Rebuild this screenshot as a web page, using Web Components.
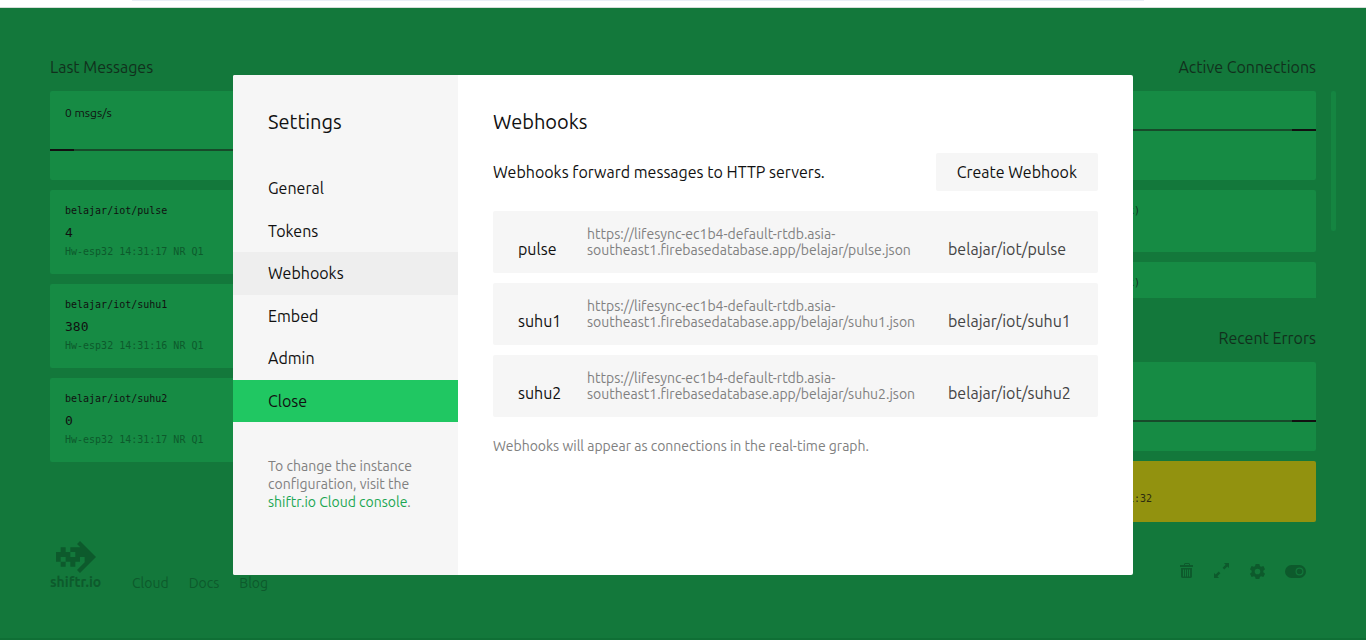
<!DOCTYPE html>
<html lang="en">
<head>
<meta charset="utf-8">
<meta name="viewport" content="width=device-width, initial-scale=1">
<title>shiftr.io – Settings</title>
<style>
  html, body { height: 100%; margin: 0; }
  body {
    --sans: Ubuntu, "Noto Sans", sans-serif;
    --mono: "DejaVu Sans Mono", monospace;
    --ink: #111;
    --card: #168b44;
    --shade: #0d5a2c;
    font: 16px/18px var(--sans);
    color: var(--ink);
    background: #13783b;
  }
</style>
</head>
<body>
<shiftr-app>
  <message-panel slot="left"></message-panel>
  <status-panel slot="right"></status-panel>
  <app-footer slot="footer"></app-footer>
  <settings-dialog slot="dialog">
    <settings-nav slot="nav"></settings-nav>
    <webhook-list></webhook-list>
  </settings-dialog>
</shiftr-app>

<script>
const define = (name, html) => {
  const template = document.createElement('template');
  template.innerHTML = html;
  customElements.define(name, class extends HTMLElement {
    constructor() {
      super();
      this.attachShadow({ mode: 'open' }).append(template.content.cloneNode(true));
    }
  });
};

define('shiftr-app', `
  <style>
    :host { display: flex; flex-direction: column; min-height: 100vh; box-sizing: border-box; position: relative; border-bottom: 2px solid #0f6f35; }
    .chrome { height: 7px; background: #fff; border-bottom: 1px solid #d5ddd8; padding: 0 222px 0 132px; }
    .chrome div { height: 1px; background: #e9eef6; }
    main { flex: 1; display: flex; justify-content: space-between; padding: 49px 50px 0; }
    .overlay { position: absolute; inset: 8px 0 0; display: flex; align-items: flex-start; justify-content: center; padding-top: 67px; }
  </style>
  <div class="chrome"><div></div></div>
  <main><slot name="left"></slot><slot name="right"></slot></main>
  <slot name="footer"></slot>
  <div class="overlay"><slot name="dialog"></slot></div>
`);

define('panel-title', `
  <style>
    :host { display: block; margin-bottom: 14px; opacity: .7; }
    h2 { margin: 0; font-size: 16px; line-height: 20px; font-weight: 400; }
  </style>
  <h2><slot></slot></h2>
`);

define('rate-card', `
  <style>
    :host { display: flex; flex-direction: column; box-sizing: border-box; height: 89px; border-radius: 2px; background: var(--card); font-size: 12px; }
    span { flex: 0 0 var(--top, 58px); box-sizing: border-box; padding: 13px 15px 0; }
    .line { display: flex; height: 2px; background: #174a2a; }
    .line::before { content: ""; width: 24px; background: var(--ink); }
    :host([reverse]) .line { justify-content: flex-end; }
  </style>
  <span><slot></slot></span><div class="line"></div>
`);

define('message-card', `
  <style>
    :host { display: grid; align-content: start; box-sizing: border-box; height: 84px; padding: 12px 15px 0; border-radius: 2px; background: var(--card); font-family: var(--mono); font-size: 10px; }
    .value { font-size: 13px; line-height: 26px; }
    .meta { line-height: 12px; color: var(--shade); }
  </style>
  <slot name="topic"></slot>
  <div class="value"><slot></slot></div>
  <div class="meta"><slot name="meta"></slot></div>
`);

define('message-panel', `
  <style>
    :host { display: block; width: 203px; }
    .list { display: grid; gap: 10px; }
  </style>
  <panel-title>Last Messages</panel-title>
  <div class="list">
    <rate-card>0 msgs/s</rate-card>
    <message-card><span slot="topic">belajar/iot/pulse</span>4<span slot="meta">Hw-esp32 14:31:17 NR Q1</span></message-card>
    <message-card><span slot="topic">belajar/iot/suhu1</span>380<span slot="meta">Hw-esp32 14:31:16 NR Q1</span></message-card>
    <message-card><span slot="topic">belajar/iot/suhu2</span>0<span slot="meta">Hw-esp32 14:31:17 NR Q1</span></message-card>
  </div>
`);

define('status-panel', `
  <style>
    :host { display: block; width: 203px; text-align: right; }
    .scroll { position: relative; margin-bottom: 30px; }
    .list { display: grid; gap: 10px; text-align: left; }
    .clip { height: 207px; overflow: hidden; }
    .thumb { position: absolute; top: 0; right: -20px; width: 5px; height: 140px; border-radius: 2px; background: #158541; }
    .item { box-sizing: border-box; height: 62px; padding: 12px 15px; border-radius: 2px; background: var(--card); font: 10px/18px var(--mono); color: #10331f; }
    .error { height: 61px; padding-top: 29px; background: #92920f; color: #2c2c10; }
    rate-card[short] { --top: 38px; }
  </style>
  <panel-title>Active Connections</panel-title>
  <div class="scroll">
    <div class="list clip">
      <rate-card reverse short></rate-card>
      <div class="item">k)</div>
      <div class="item">k)</div>
    </div>
    <div class="thumb"></div>
  </div>
  <panel-title>Recent Errors</panel-title>
  <div class="list">
    <rate-card reverse></rate-card>
    <div class="item error">1:32</div>
  </div>
`);

define('app-footer', `
  <style>
    :host { display: flex; justify-content: space-between; align-items: flex-end; padding: 0 50px 46px; color: var(--shade); font-size: 14px; }
    nav { display: flex; align-items: flex-end; gap: 20px; }
    a { color: inherit; text-decoration: none; line-height: 18px; }
    .logo { display: grid; width: 62px; font-weight: 700; line-height: 16px; padding-bottom: 2px; }
    .logo svg { margin: 0 0 1px 6px; }
    svg { display: block; fill: currentColor; }
    .tools { display: flex; align-items: center; gap: 20px; padding: 0 10px 13px 0; }
    button { border: 0; padding: 0; background: none; color: inherit; }
  </style>
  <nav>
    <a class="logo" href="#">
      <svg width="40" height="32" viewBox="0 0 120 96" aria-hidden="true"><path fill-rule="evenodd" d="M72 0 120 48 72 96 63 87 86 64V48H72V62H58V77H43V62H29V77H14V62H0V33H14V19H29V33H43V19H73L63 9ZM43 33V48H58V33ZM14 48V62H29V48Z"/></svg>
      shiftr.io
    </a>
    <a href="#">Cloud</a><a href="#">Docs</a><a href="#">Blog</a>
  </nav>
  <div class="tools">
    <button aria-label="Clear"><svg width="14" height="16" viewBox="0 0 14 16"><path fill-rule="evenodd" d="M0 2H4V1L5 0H9L10 1V2H13V4H0ZM5 1V2H9V1ZM1 5H12V14L11 15H2L1 14ZM3 6.500V13.500H4V6.500ZM5 6.500V13.500H6V6.500ZM7 6.500V13.500H8V6.500ZM9 6.500V13.500H10V6.500Z"/></svg></button>
    <button aria-label="Full screen"><svg width="16" height="16" viewBox="0 0 16 16"><path d="M10 0H15V5L13.300 3.400 10.300 6.400 8.600 4.700 11.600 1.700ZM0 15V10L1.700 11.600 4.700 8.600 6.400 10.300 3.400 13.300 5 15Z"/></svg></button>
    <button aria-label="Settings"><svg width="15" height="15" viewBox="0 0 16 16"><path fill-rule="evenodd" d="M6 0H10L10.600 2.400 12 3 14.300 2.200 16 5.500 14.200 7.200V8.800L16 10.500 14.300 13.800 12 13 10.600 13.600 10 16H6L5.400 13.600 4 13 1.700 13.800 0 10.500 1.800 8.800V7.200L0 5.500 1.700 2.200 4 3 5.400 2.400ZM8 5A3 3 0 1 0 8 11 3 3 0 1 0 8 5Z"/></svg></button>
    <button aria-label="Toggle panels"><svg width="21" height="13" viewBox="0 0 21 13"><path fill-rule="evenodd" d="M6.500 0H14.500A6.500 6.500 0 0 1 14.500 13H6.500A6.500 6.500 0 0 1 6.500 0ZM14.500 2.500A4 4 0 1 0 14.500 10.500 4 4 0 1 0 14.500 2.500ZM14.500 3.700A2.800 2.800 0 1 1 14.500 9.300 2.800 2.800 0 1 1 14.500 3.700Z"/></svg></button>
  </div>
`);

define('settings-dialog', `
  <style>
    :host { display: grid; grid-template-columns: 225px 1fr; width: 900px; max-width: 100%; min-height: 500px; border-radius: 2px; overflow: hidden; background: #fff; }
    aside { background: #f6f6f6; }
    section { padding: 35px; }
  </style>
  <aside><slot name="nav"></slot></aside>
  <section><slot></slot></section>
`);

define('settings-nav', `
  <style>
    :host { display: block; }
    h1 { margin: 0; padding: 35px 35px 33px; font-size: 20px; line-height: 24px; font-weight: 400; }
    nav { display: grid; grid-template-rows: repeat(6, 1fr); height: 255px; }
    nav a, nav button { display: flex; align-items: center; padding: 0 35px; border: 0; background: none; color: inherit; font: inherit; text-decoration: none; }
    .active { background: #eee; }
    nav button { background: #20c762; }
    p { margin: 0; padding: 35px 30px 0 35px; font-size: 14px; line-height: 18px; color: #808080; }
    p a { color: #1ba652; text-decoration: none; }
  </style>
  <h1>Settings</h1>
  <nav>
    <a href="#">General</a>
    <a href="#">Tokens</a>
    <a href="#" class="active" aria-current="page">Webhooks</a>
    <a href="#">Embed</a>
    <a href="#">Admin</a>
    <button type="button">Close</button>
  </nav>
  <p>To change the instance configuration, visit the <a href="#">shiftr.io Cloud console</a>.</p>
`);

define('webhook-list', `
  <style>
    :host { display: block; }
    h1 { margin: 0 0 19px; font-size: 20px; line-height: 24px; font-weight: 400; }
    header { display: flex; align-items: center; justify-content: space-between; margin-bottom: 20px; }
    button { height: 38px; padding: 0 21px; border: 0; border-radius: 2px; background: #f6f6f6; color: inherit; font: inherit; }
    table, tbody { display: grid; gap: 10px; }
    tr { display: grid; grid-template-columns: 44px 1fr 125px; gap: 25px; align-items: end; padding: 15px 25px; border-radius: 2px; background: #f6f6f6; }
    td { padding: 0; line-height: 18px; }
    .url { font-size: 14px; line-height: 16px; color: #808080; }
    .topic { color: #444; }
    p { margin: 20px 0 0; font-size: 14px; line-height: 18px; color: #808080; }
  </style>
  <h1>Webhooks</h1>
  <header><span>Webhooks forward messages to HTTP servers.</span><button type="button">Create Webhook</button></header>
  <table><tbody>
    <tr><td>pulse</td><td class="url">https://lifesync-ec1b4-default-rtdb.asia-southeast1.firebasedatabase.app/belajar/pulse.json</td><td class="topic">belajar/iot/pulse</td></tr>
    <tr><td>suhu1</td><td class="url">https://lifesync-ec1b4-default-rtdb.asia-southeast1.firebasedatabase.app/belajar/suhu1.json</td><td class="topic">belajar/iot/suhu1</td></tr>
    <tr><td>suhu2</td><td class="url">https://lifesync-ec1b4-default-rtdb.asia-southeast1.firebasedatabase.app/belajar/suhu2.json</td><td class="topic">belajar/iot/suhu2</td></tr>
  </tbody></table>
  <p>Webhooks will appear as connections in the real-time graph.</p>
`);
</script>
</body>
</html>
